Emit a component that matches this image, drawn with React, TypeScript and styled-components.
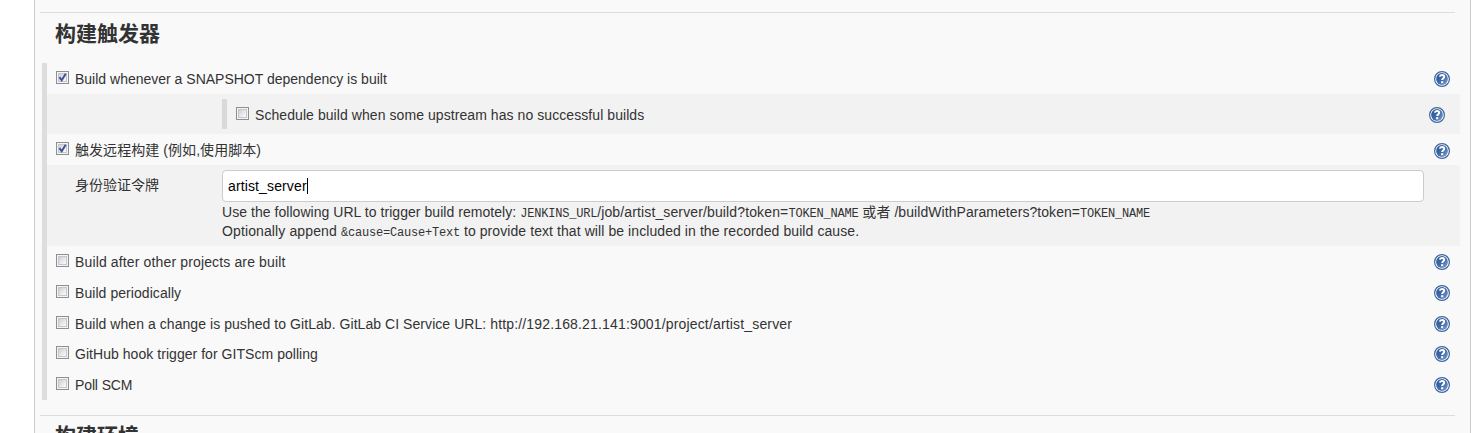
import React from 'react';
import styled, { createGlobalStyle } from 'styled-components';

const GlobalStyle = createGlobalStyle`
  * { box-sizing: border-box; }
  html, body { margin: 0; height: 433px; overflow: hidden; background: #fff; }
  body {
    font-family: "Liberation Sans", Arial, "Noto Sans CJK SC", sans-serif;
    font-size: 14px;
    color: #333;
  }
`;

const Panel = styled.main`
  width: 1437px;
  height: 433px;
  margin-left: 34px;
  padding: 12px 10px 0 5px;
  overflow: hidden;
  background: #f9f9f9;
  border: solid #ccc;
  border-width: 0 1px;
`;

const Section = styled.section`
  height: 403px;
`;

const Heading = styled.h2<{ $top?: number }>`
  width: 1415px;
  height: 51px;
  margin: 0;
  padding: ${(p) => p.$top ?? 5}px 0 0 15px;
  border-top: 1px solid #ddd;
  font-size: 21px;
  line-height: 32px;
  font-weight: 700;
`;

const Group = styled.div`
  width: 1418px;
  margin-left: 2px;
  border-left: 5px solid #ddd;
`;

const Row = styled.div<{ $height?: number }>`
  display: flex;
  align-items: flex-start;
  height: ${(p) => p.$height ?? 31}px;
  padding: 8px 10px 0 9px;
`;

const Check = styled.span`
  flex: none;
  width: 13px;
  height: 13px;
  margin-right: 6px;
  border: 1px solid #8e8f8f;
  background: linear-gradient(135deg, #cbcfd5, #f6f6f6 85%) content-box, #f4f4f4;
  padding: 2px;
  box-shadow: inset 0 0 0 1px #f4f4f4, inset 0 0 0 2px #c4c8cc;

  svg { display: block; width: 11px; height: 11px; margin: -2px; }
`;

const Label = styled.span<{ $spacing?: number }>`
  flex: 1;
  height: 16px;
  line-height: 16px;
  white-space: nowrap;
  letter-spacing: ${(p) => p.$spacing ?? 0}px;
`;

const HelpIcon = styled.svg<{ $drop?: number }>`
  display: block;
  flex: none;
  width: 16px;
  height: 16px;
  margin-top: ${(p) => p.$drop ?? 0}px;
`;

const Nested = styled.div`
  display: flex;
  width: 1413px;
  height: 40px;
  padding: 5px 15px 0 175px;
  background: #f2f2f2;
`;

const NestedRow = styled.div`
  display: flex;
  flex: 1;
  height: 30px;
  padding: 8px 0 0 9px;
  border-left: 5px solid #d9d9d9;
`;

const TokenBlock = styled.div`
  display: grid;
  grid-template-columns: 147px 1202px;
  width: 1413px;
  height: 81px;
  padding: 5px 0 0 28px;
  background: #f2f2f2;
`;

const TokenLabel = styled.div`
  padding-top: 5px;
  line-height: 20px;
`;

const Input = styled.div`
  display: flex;
  align-items: center;
  height: 32px;
  padding-left: 5px;
  background: #fff;
  border: 1px solid #ccc;
  border-radius: 4px;
  color: #000;
  letter-spacing: 0.13px;
`;

const Caret = styled.span`
  width: 1px;
  height: 16px;
  background: #000;
`;

const Description = styled.div`
  padding-top: 1px;
  line-height: 19px;
  white-space: nowrap;
`;

const Line = styled.div`
  height: 19px;
`;

const Run = styled.span<{ $spacing: number }>`
  letter-spacing: ${(p) => p.$spacing}px;
`;

const Code = styled.code`
  font-family: "Liberation Mono", "Courier New", monospace;
  font-size: 12px;
  letter-spacing: -0.2px;
`;

const Help = ({ drop }: { drop?: number }) => (
  <HelpIcon viewBox="0 0 16 16" $drop={drop}>
    <defs>
      <linearGradient id="disc" x1="0" y1="0" x2="1" y2="1">
        <stop offset="0" stopColor="#2a5290" />
        <stop offset="0.5" stopColor="#3f69a6" />
        <stop offset="1" stopColor="#86a5d0" />
      </linearGradient>
    </defs>
    <circle cx="8" cy="8" r="7.4" fill="#fff" stroke="#3c65a0" strokeWidth="1.2" />
    <circle cx="8" cy="8" r="5.9" fill="url(#disc)" />
    <path d="M5.8 5.7C6 4.5 6.8 4 8 4s2.2.7 2.2 1.8c0 1.5-2 1.5-2 3.1" fill="none" stroke="#fff" strokeWidth="2" />
    <path d="M7.1 10.2h2.1v2H7.1z" fill="#fff" />
  </HelpIcon>
);

const Checkbox = ({ checked }: { checked?: boolean }) => (
  <Check role="checkbox" aria-checked={!!checked}>
    {checked && (
      <svg viewBox="0 0 11 11">
        <path d="M2.4 5.1 4.7 8.2 8.7 1.7" fill="none" stroke="#3d5196" strokeWidth="1.9" />
      </svg>
    )}
  </Check>
);

const triggers = [
  { text: 'Build after other projects are built', height: 31, spacing: 0.14 },
  { text: 'Build periodically', height: 31, spacing: 0.06 },
  {
    text: 'Build when a change is pushed to GitLab. GitLab CI Service URL: ',
    url: 'http://192.168.21.141:9001/project/artist_server',
    height: 30,
    spacing: 0.055,
  },
  { text: 'GitHub hook trigger for GITScm polling', height: 31, spacing: 0.045 },
  { text: 'Poll SCM', height: 31, spacing: -0.12 },
];

export default function App() {
  return (
    <>
      <GlobalStyle />
      <Panel>
        <Section>
          <Heading>构建触发器</Heading>
          <Group>
            <Row>
              <Checkbox checked />
              <Label>Build whenever a SNAPSHOT dependency is built</Label>
              <Help />
            </Row>
            <Nested>
              <NestedRow>
                <Checkbox />
                <Label $spacing={0.07}>Schedule build when some upstream has no successful builds</Label>
                <Help />
              </NestedRow>
            </Nested>
            <Row>
              <Checkbox checked />
              <Label $spacing={0.06}>触发远程构建 (例如,使用脚本)</Label>
              <Help drop={1} />
            </Row>
            <TokenBlock>
              <TokenLabel>身份验证令牌</TokenLabel>
              <div>
                <Input>artist_server<Caret /></Input>
                <Description>
                  <Line>
                    <Run $spacing={0.045}>Use the following URL to trigger build remotely: </Run>
                    <Code>JENKINS_URL</Code>
                    <Run $spacing={0.13}>/job/artist_server/build?token=</Run>
                    <Code>TOKEN_NAME</Code>
                    <Run $spacing={0.06}> 或者 /buildWithParameters?token=</Run>
                    <Code>TOKEN_NAME</Code>
                  </Line>
                  <Line>
                    <Run $spacing={0.12}>Optionally append </Run>
                    <Code>&amp;cause=Cause+Text</Code>
                    <Run $spacing={0.08}> to provide text that will be included in the recorded build cause.</Run>
                  </Line>
                </Description>
              </div>
            </TokenBlock>
            {triggers.map((t) => (
              <Row key={t.text} $height={t.height}>
                <Checkbox />
                <Label $spacing={t.spacing}>
                  {t.text}
                  {t.url && <Run $spacing={0.16}>{t.url}</Run>}
                </Label>
                <Help />
              </Row>
            ))}
          </Group>
        </Section>
        <Heading $top={4}>构建环境</Heading>
      </Panel>
    </>
  );
}
